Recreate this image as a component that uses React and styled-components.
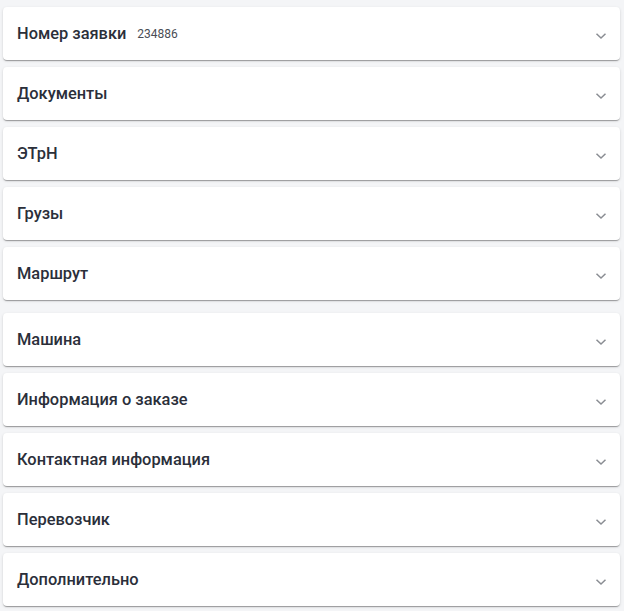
import styled, { createGlobalStyle } from 'styled-components';

const Global = createGlobalStyle`
  body {
    margin: 0;
    background: #f4f5f7;
    font-family: Roboto, "Noto Sans", sans-serif;
  }
`

const Page = styled.div`
  padding: 7px 4px 5px 3px;
  display: flex;
  flex-direction: column;
  gap: 13px;
`

const Group = styled.div`
  display: flex;
  flex-direction: column;
  gap: 7px;
`

const Card = styled.div`
  height: 53px;
  background: #fff;
  border-radius: 4px;
  box-shadow: 0px 2px 1px -1px rgba(0,0,0,0.2), 0px 1px 1px 0px rgba(0,0,0,0.14), 0px 1px 3px 0px rgba(0,0,0,0.12);
  display: flex;
  align-items: center;
  padding: 0 13px 0 14px;
  box-sizing: border-box;
`

const Title = styled.span`
  font-size: 16.4px;
  font-weight: 500;
  color: #2b2f3a;
`

const Number = styled.span`
  margin-left: 11px;
  font-size: 12px;
  color: #4a4d55;
`

const Chevron = styled.svg`
  margin-left: auto;
  margin-top: 4px;
`

const groups = [
  ['Номер заявки', 'Документы', 'ЭТрН', 'Грузы', 'Маршрут'],
  ['Машина', 'Информация о заказе', 'Контактная информация', 'Перевозчик', 'Дополнительно'],
]

const App = () => {
  return (
    <>
      <Global />
      <Page>
        {groups.map((g, i) => (
          <Group key={i}>
            {g.map((name) => (
              <Card key={name}>
                <Title>{name}</Title>
                {name === 'Номер заявки' && <Number>234886</Number>}
                <Chevron width="12" height="8" viewBox="0 0 12 8">
                  <path d="M1.5 1.8 L6 6 L10.5 1.8" fill="none" stroke="#8a8d93" strokeWidth="1.5" />
                </Chevron>
              </Card>
            ))}
          </Group>
        ))}
      </Page>
    </>
  )
}

export default App
